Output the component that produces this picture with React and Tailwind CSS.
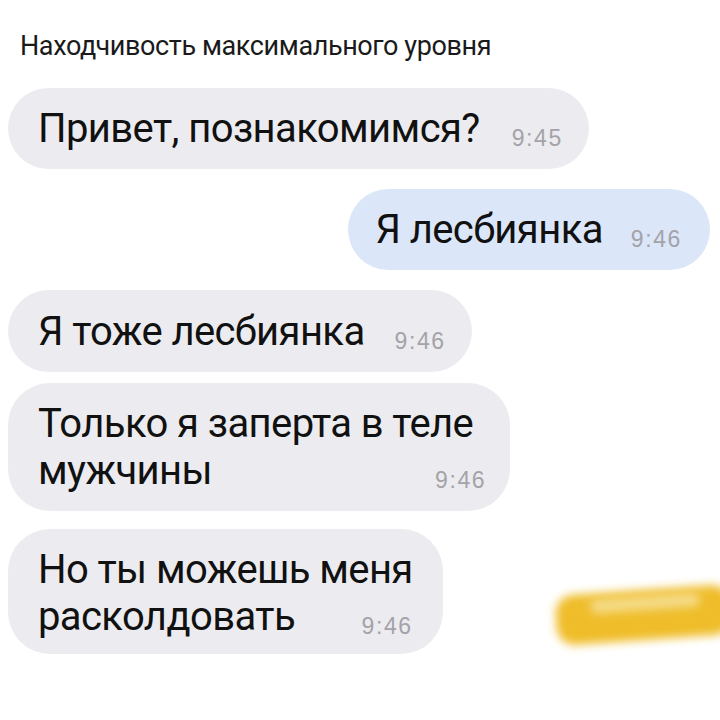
export default function App() {
  const font = { fontFamily: "Roboto, 'Noto Sans', sans-serif" };
  const time = "text-[23px] leading-[26px] tracking-[1.6px] text-[#a3a3a9] font-['Liberation_Sans',Arial,sans-serif]";
  return (
    <div className="relative w-[720px] h-[720px] overflow-hidden bg-white text-[#111]" style={font}>
      <div className="pt-[30px] pl-[20px] text-[27px] leading-[32px] tracking-[-0.4px] text-[#1a1a1a]">
        Находчивость максимального уровня
      </div>
      <div className="flex flex-col px-[8px] pt-[26px] gap-[20px]">
        <div className="self-start flex items-end rounded-[42px] bg-[#ececf0] pl-[30px] pr-[26px] py-[17px]">
          <span className="text-[40px] leading-[47px] tracking-[-0.6px]">Привет, познакомимся?</span>
          <span className={"ml-[32px] mb-[1px] " + time}>9:45</span>
        </div>
        <div className="self-end mr-[2px] flex items-end rounded-[42px] bg-[#dce6f9] pl-[27px] pr-[28px] py-[17px]">
          <span className="text-[40px] leading-[47px] tracking-[-0.6px]">Я лесбиянка</span>
          <span className={"ml-[28px] mb-[1px] " + time}>9:46</span>
        </div>
        <div className="self-start flex items-end rounded-[42px] bg-[#ececf0] pl-[30px] pr-[26px] py-[17px] h-[82px]">
          <span className="text-[40px] leading-[47px] tracking-[-0.6px]">Я тоже лесбиянка</span>
          <span className={"ml-[30px] mb-[1px] " + time}>9:46</span>
        </div>
        <div className="self-start -mt-[9px] flex flex-col rounded-[42px] bg-[#ececf0] pl-[30px] pr-[24px] py-[17px]">
          <span className="pr-[13px] text-[40px] leading-[47px] tracking-[-0.6px]">Только я заперта в теле</span>
          <div className="flex items-end justify-between">
            <span className="text-[40px] leading-[47px] tracking-[-0.6px]">мужчины</span>
            <span className={"ml-[30px] mb-[1px] " + time}>9:46</span>
          </div>
        </div>
        <div className="self-start -mt-[2px] flex flex-col rounded-[42px] bg-[#ececf0] pl-[30px] pr-[30px] pt-[17px] pb-[14px]">
          <span className="text-[40px] leading-[47px] tracking-[-0.6px]">Но ты можешь меня</span>
          <div className="flex items-end justify-between">
            <span className="text-[40px] leading-[47px] tracking-[-0.6px]">расколдовать</span>
            <span className={"ml-[30px] mb-[1px] " + time}>9:46</span>
          </div>
        </div>
      </div>
      <div className="absolute left-[556px] top-[590px] w-[175px] h-[50px] -rotate-[4deg] rounded-[18px] bg-[#efbd2a] blur-[5px]" />
      <div className="absolute left-[590px] top-[596px] w-[110px] h-[14px] -rotate-[4deg] rounded-[8px] bg-[#f6dc8a] blur-[5px]" />
    </div>
  );
}
